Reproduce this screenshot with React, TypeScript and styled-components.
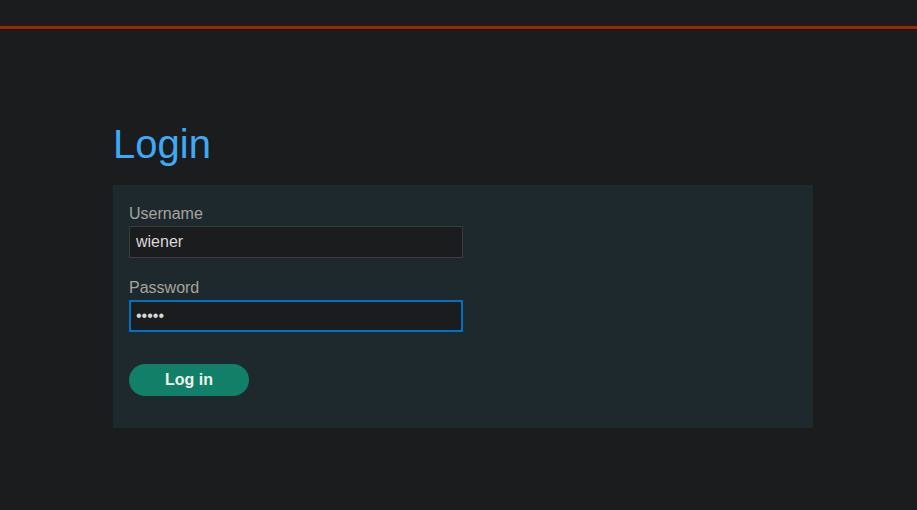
import React from "react";
import styled, { createGlobalStyle } from "styled-components";

const GlobalStyle = createGlobalStyle`
  html, body {
    margin: 0;
    padding: 0;
    background: #1b1c1e;
    font-family: "Liberation Sans", Arial, sans-serif;
  }
`;

const Page = styled.div`
  min-height: 510px;
  background: #1b1c1e;
`;

const TopBar = styled.div`
  height: 26px;
  border-bottom: 3px solid #a32600;
`;

const Container = styled.main`
  width: 700px;
  margin-left: 113px;
  padding-top: 91px;
`;

const Title = styled.h1`
  margin: 0 0 17px;
  font-size: 40px;
  font-weight: 400;
  line-height: 48px;
  color: #3fa9f5;
`;

const Card = styled.form`
  background: #1e292e;
  padding: 20px 16px 32px;
  display: flex;
  flex-direction: column;
`;

const Label = styled.label`
  color: #a6a49c;
  font-size: 16px;
  line-height: 18px;
  margin-bottom: 3px;
`;

const Input = styled.input<{ $focused?: boolean }>`
  box-sizing: border-box;
  width: 334px;
  height: 32px;
  margin-bottom: 21px;
  background: #1b1c1e;
  color: #d8d8d8;
  font-family: "Liberation Sans", Arial, sans-serif;
  font-size: 16px;
  outline: none;
  border: ${(p) => (p.$focused ? "2px solid #0071c5" : "1px solid #3a3c3d")};
  padding: 0 0 0 ${(p) => (p.$focused ? "5px" : "6px")};
`;

const Button = styled.button`
  margin-top: 11px;
  width: 120px;
  height: 32px;
  border: none;
  border-radius: 16px;
  background: #128069;
  color: #f0f0ea;
  font-family: "Liberation Sans", Arial, sans-serif;
  font-size: 16px;
  font-weight: 700;
  cursor: pointer;
`;

export default function App() {
  return (
    <Page>
      <GlobalStyle />
      <TopBar />
      <Container>
        <Title>Login</Title>
        <Card onSubmit={(e) => e.preventDefault()}>
          <Label>Username</Label>
          <Input defaultValue="wiener" />
          <Label>Password</Label>
          <Input type="password" defaultValue="peter" $focused />
          <Button type="submit">Log in</Button>
        </Card>
      </Container>
    </Page>
  );
}
